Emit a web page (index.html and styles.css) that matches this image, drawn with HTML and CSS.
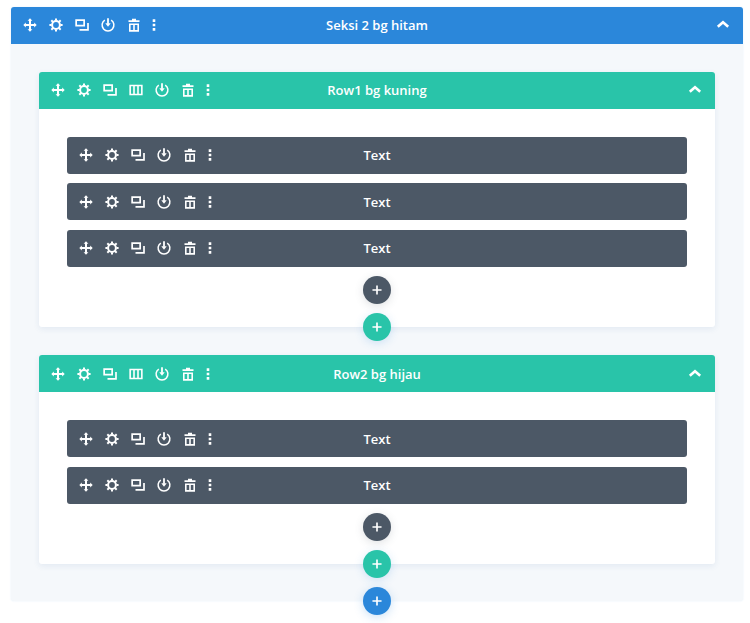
FILE: index.html
```html
<!DOCTYPE html>
<html lang="id">
<head>
<meta charset="utf-8">
<title>Seksi 2 bg hitam</title>
<link rel="stylesheet" href="styles.css">
</head>
<body>
<svg class="defs" width="0" height="0" aria-hidden="true">
  <symbol id="i-move" viewBox="0 0 16 16"><path d="M8 3v10M3 8h10" fill="none" stroke="currentColor" stroke-width="2"/><path d="M8 1.300l2.400 2.500H5.600zM8 14.700l2.400-2.500H5.600zM1.300 8l2.500-2.400v4.800zM14.700 8l-2.500-2.400v4.800z" fill="currentColor"/></symbol>
  <symbol id="i-gear" viewBox="0 0 16 16"><circle cx="8" cy="8" r="3.900" fill="none" stroke="currentColor" stroke-width="2"/><path fill="none" stroke="currentColor" stroke-width="2" d="M8 1.400v2.200M8 12.400v2.200M1.400 8h2.200M12.400 8h2.200M3.330 3.330l1.560 1.560M11.110 11.110l1.560 1.560M3.330 12.670l1.560-1.560M11.110 4.890l1.560-1.560"/></symbol>
  <symbol id="i-copy" viewBox="0 0 16 16"><path fill="none" stroke="currentColor" stroke-width="1.700" d="M2.150 3.150h8v5.500h-8z"/><path fill="none" stroke="currentColor" stroke-width="1.700" d="M14 6v6.850H5.500"/></symbol>
  <symbol id="i-cols" viewBox="0 0 16 16"><path fill="none" stroke="currentColor" stroke-width="1.600" d="M2.150 3.500h11.700v9H2.150zM6 3.500v9M10 3.500v9"/></symbol>
  <symbol id="i-power" viewBox="0 0 16 16"><path fill="none" stroke="currentColor" stroke-width="1.500" d="M4.800 3.100a5.900 5.900 0 1 0 6.400 0"/><path fill="none" stroke="currentColor" stroke-width="1.800" d="M8 1.300v5.500"/><path fill="currentColor" d="M5.300 6.300h5.400L8 9.800z"/></symbol>
  <symbol id="i-trash" viewBox="0 0 16 16"><path fill="currentColor" d="M6 1.700h4v1.500h3.500v1.700h-11V3.200H6z"/><path fill="none" stroke="currentColor" stroke-width="1.600" d="M3.800 7.200h8.400v6.700H3.800zM8 7.200v6.700"/></symbol>
  <symbol id="i-dots" viewBox="0 0 14 16"><path fill="currentColor" d="M5.700 2.300h2.600v2.600H5.700zM5.700 6.700h2.600v2.600H5.700zM5.700 11.100h2.600v2.600H5.700z"/></symbol>
  <symbol id="i-up" viewBox="0 0 16 16"><path fill="none" stroke="currentColor" stroke-width="2.600" d="M2.800 9.800L8 5.200l5.200 4.600"/></symbol>
  <symbol id="i-plus" viewBox="0 0 16 16"><path fill="none" stroke="currentColor" stroke-width="1.900" d="M8 2.800v10.400M2.800 8h10.400"/></symbol>
</svg>

<main class="section">
  <header class="bar bar-section">
    <div class="tools">
      <svg class="tool"><use href="#i-move"/></svg>
      <svg class="tool"><use href="#i-gear"/></svg>
      <svg class="tool"><use href="#i-copy"/></svg>
      <svg class="tool"><use href="#i-power"/></svg>
      <svg class="tool"><use href="#i-trash"/></svg>
      <svg class="tool tool-dots"><use href="#i-dots"/></svg>
    </div>
    <div class="title">Seksi 2 bg hitam</div>
    <svg class="toggle"><use href="#i-up"/></svg>
  </header>

  <div class="section-body">
    <section class="row">
      <header class="bar bar-row">
        <div class="tools">
          <svg class="tool"><use href="#i-move"/></svg>
          <svg class="tool"><use href="#i-gear"/></svg>
          <svg class="tool"><use href="#i-copy"/></svg>
          <svg class="tool"><use href="#i-cols"/></svg>
          <svg class="tool"><use href="#i-power"/></svg>
          <svg class="tool"><use href="#i-trash"/></svg>
          <svg class="tool tool-dots"><use href="#i-dots"/></svg>
        </div>
        <div class="title">Row1 bg kuning</div>
        <svg class="toggle"><use href="#i-up"/></svg>
      </header>
      <div class="row-body">
        <div class="bar bar-module">
          <div class="tools">
            <svg class="tool"><use href="#i-move"/></svg>
            <svg class="tool"><use href="#i-gear"/></svg>
            <svg class="tool"><use href="#i-copy"/></svg>
            <svg class="tool"><use href="#i-power"/></svg>
            <svg class="tool"><use href="#i-trash"/></svg>
            <svg class="tool tool-dots"><use href="#i-dots"/></svg>
          </div>
          <div class="title">Text</div>
          <span></span>
        </div>
        <div class="bar bar-module">
          <div class="tools">
            <svg class="tool"><use href="#i-move"/></svg>
            <svg class="tool"><use href="#i-gear"/></svg>
            <svg class="tool"><use href="#i-copy"/></svg>
            <svg class="tool"><use href="#i-power"/></svg>
            <svg class="tool"><use href="#i-trash"/></svg>
            <svg class="tool tool-dots"><use href="#i-dots"/></svg>
          </div>
          <div class="title">Text</div>
          <span></span>
        </div>
        <div class="bar bar-module">
          <div class="tools">
            <svg class="tool"><use href="#i-move"/></svg>
            <svg class="tool"><use href="#i-gear"/></svg>
            <svg class="tool"><use href="#i-copy"/></svg>
            <svg class="tool"><use href="#i-power"/></svg>
            <svg class="tool"><use href="#i-trash"/></svg>
            <svg class="tool tool-dots"><use href="#i-dots"/></svg>
          </div>
          <div class="title">Text</div>
          <span></span>
        </div>
        <button class="add add-dark"><svg class="plus"><use href="#i-plus"/></svg></button>
      </div>
      <button class="add add-teal add-edge"><svg class="plus"><use href="#i-plus"/></svg></button>
    </section>

    <section class="row">
      <header class="bar bar-row">
        <div class="tools">
          <svg class="tool"><use href="#i-move"/></svg>
          <svg class="tool"><use href="#i-gear"/></svg>
          <svg class="tool"><use href="#i-copy"/></svg>
          <svg class="tool"><use href="#i-cols"/></svg>
          <svg class="tool"><use href="#i-power"/></svg>
          <svg class="tool"><use href="#i-trash"/></svg>
          <svg class="tool tool-dots"><use href="#i-dots"/></svg>
        </div>
        <div class="title">Row2 bg hijau</div>
        <svg class="toggle"><use href="#i-up"/></svg>
      </header>
      <div class="row-body">
        <div class="bar bar-module">
          <div class="tools">
            <svg class="tool"><use href="#i-move"/></svg>
            <svg class="tool"><use href="#i-gear"/></svg>
            <svg class="tool"><use href="#i-copy"/></svg>
            <svg class="tool"><use href="#i-power"/></svg>
            <svg class="tool"><use href="#i-trash"/></svg>
            <svg class="tool tool-dots"><use href="#i-dots"/></svg>
          </div>
          <div class="title">Text</div>
          <span></span>
        </div>
        <div class="bar bar-module">
          <div class="tools">
            <svg class="tool"><use href="#i-move"/></svg>
            <svg class="tool"><use href="#i-gear"/></svg>
            <svg class="tool"><use href="#i-copy"/></svg>
            <svg class="tool"><use href="#i-power"/></svg>
            <svg class="tool"><use href="#i-trash"/></svg>
            <svg class="tool tool-dots"><use href="#i-dots"/></svg>
          </div>
          <div class="title">Text</div>
          <span></span>
        </div>
        <button class="add add-dark"><svg class="plus"><use href="#i-plus"/></svg></button>
      </div>
      <button class="add add-teal add-edge"><svg class="plus"><use href="#i-plus"/></svg></button>
    </section>
  </div>
  <button class="add add-blue add-edge"><svg class="plus"><use href="#i-plus"/></svg></button>
</main>
</body>
</html>
```

FILE: styles.css
```css
* { box-sizing: border-box; }

html, body { height: 100%; }

body {
  margin: 0;
  padding: 6.5px 7px 0 11px;
  background: #fff;
  font-family: "Open Sans", "Liberation Sans", sans-serif;
  overflow: hidden;
}

.defs { position: absolute; }

.section {
  position: relative;
  background: #f5f8fb;
  border-radius: 3px;
  box-shadow: 0 0 2px rgba(43, 135, 218, .12);
}

.section-body {
  display: flex;
  flex-direction: column;
  gap: 28px;
  padding: 28px 28px 37px;
}

.row {
  position: relative;
  background: #fff;
  border-radius: 3px;
  box-shadow: 0 2px 6px rgba(43, 87, 151, .09);
}

.row-body {
  display: flex;
  flex-direction: column;
  gap: 9.5px;
  padding: 28px 28px 23px;
}

.bar {
  display: grid;
  grid-template-columns: 1fr auto 1fr;
  align-items: center;
  height: 37px;
  padding: 0 12px;
  color: #fff;
}

.bar-section { background: #2b87da; border-radius: 3px 3px 0 0; }
.bar-row { background: #29c4a9; border-radius: 3px 3px 0 0; }
.bar-module { background: #4c5866; border-radius: 3px; }

.tools {
  display: flex;
  align-items: center;
  margin-left: -5.8px;
}

.tool {
  display: block;
  flex: none;
  width: 26px;
  height: 16px;
}

.tool-dots { width: 14px; }

.title {
  font-size: 13px;
  font-weight: 600;
  line-height: 18px;
  text-align: center;
  white-space: nowrap;
}

.toggle {
  justify-self: end;
  display: block;
  width: 16px;
  height: 16px;
}

.add {
  display: flex;
  align-items: center;
  justify-content: center;
  flex: none;
  width: 28px;
  height: 28px;
  padding: 0;
  border: 0;
  border-radius: 50%;
  color: #fff;
}

.add-dark {
  align-self: center;
  background: #4c5866;
  box-shadow: 0 2px 8px rgba(76, 88, 102, .18);
}

.add-teal {
  background: #29c4a9;
  box-shadow: 0 2px 10px rgba(43, 135, 218, .2);
}

.add-blue {
  background: #2b87da;
  box-shadow: 0 2px 10px rgba(43, 135, 218, .25);
}

.add-edge {
  position: absolute;
  left: 50%;
  bottom: -14px;
  margin-left: -14px;
  z-index: 1;
}

.plus {
  display: block;
  width: 14px;
  height: 14px;
}
```
